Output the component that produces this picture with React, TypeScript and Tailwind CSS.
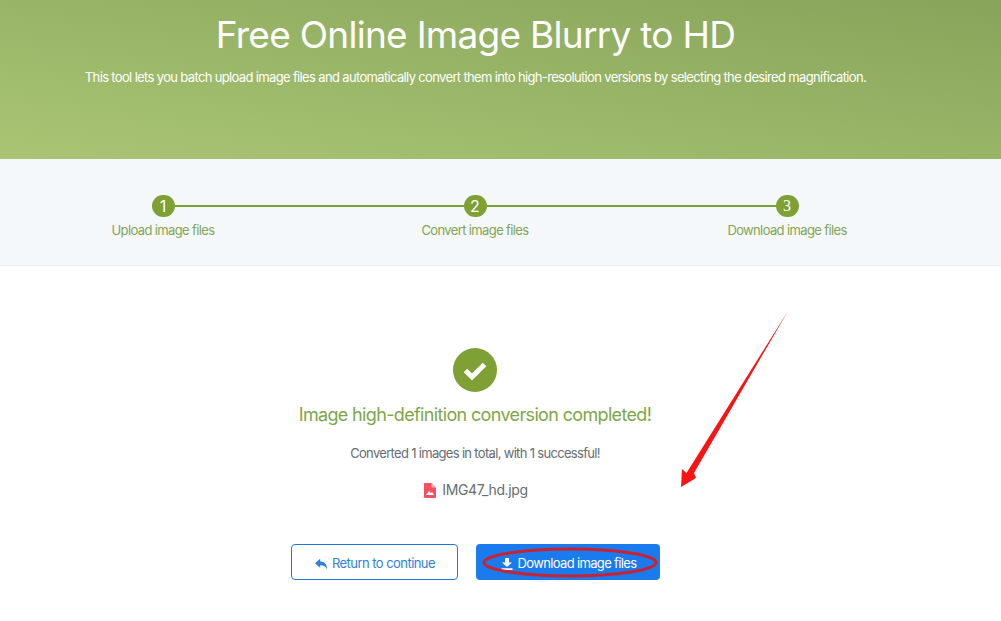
import React from "react";

function Step({ n, label, first, last }: { n: number; label: string; first?: boolean; last?: boolean }) {
  return (
    <div className="flex flex-col items-center relative">
      <div className="relative flex w-full justify-center items-center h-[22px]">
        {!first && <div className="absolute left-0 right-1/2 h-[2px] bg-[#7ea035]" />}
        {!last && <div className="absolute left-1/2 right-0 h-[2px] bg-[#7ea035]" />}
        <div className={"relative z-10 flex h-[22px] w-[23px] items-center justify-center rounded-full bg-[#7ea035] text-[16px] leading-none text-white " + (n === 3 ? "font-['Liberation_Serif',serif]" : "")}>
          {n}
        </div>
      </div>
      <div className="mt-[5px] text-[13px] leading-[16px] text-[#84a455] tracking-[-0.63px]">{label}</div>
    </div>
  );
}

export default function App() {
  return (
    <div className="relative h-[621px] w-[1001px] overflow-hidden bg-white font-['Inter','Liberation_Sans',sans-serif]">
      <header className="h-[159px] bg-gradient-to-tr from-[#a9c574] to-[#88a45a] pr-[50px] text-center text-white">
        <h1 className="pt-[12px] text-[37px] leading-[46px] font-normal tracking-[-0.72px]">Free Online Image Blurry to HD</h1>
        <p className="mt-[10px] text-[13px] leading-[18px] tracking-[-0.65px]">
          This tool lets you batch upload image files and automatically convert them into high-resolution versions by selecting the desired magnification.
        </p>
      </header>

      <section className="h-[107px] border-b border-[#e9edf0] bg-[#f4f8fb] pl-[7px] pr-[58px] pt-[36px]">
        <div className="grid grid-cols-3">
          <Step n={1} label="Upload image files" first />
          <Step n={2} label="Convert image files" />
          <Step n={3} label="Download image files" last />
        </div>
      </section>

      <main className="flex flex-col items-center pr-[51px] pt-[82px]">
        <svg viewBox="0 0 44 44" className="h-[44px] w-[44px]">
          <circle cx="22" cy="22" r="22" fill="#7ea035" />
          <path d="M12.5 22.5 L19 29 L31.5 16.5" fill="none" stroke="#fff" strokeWidth="5" />
        </svg>
        <h2 className="mt-[10px] text-[18px] leading-[26px] font-normal tracking-[-0.65px] text-[#7ea64a]">
          Image high-definition conversion completed!
        </h2>
        <p className="mt-[15px] text-[13px] leading-[20px] tracking-[-0.68px] text-[#666c72]">
          Converted 1 images in total, with 1 successful!
        </p>
        <div className="ml-[2px] mt-[17px] flex items-center gap-[6px] text-[14px] leading-[20px] tracking-[-0.37px] text-[#666c72]">
          <svg viewBox="0 0 12 15" className="h-[15px] w-[12px]">
            <path d="M0 1 Q0 0 1 0 H7.5 L12 4.5 V14 Q12 15 11 15 H1 Q0 15 0 14 Z" fill="#f4505f" />
            <path d="M7.5 0 L12 4.5 H8.5 Q7.5 4.5 7.5 3.5 Z" fill="#fbb4bb" />
            <path d="M2 12 L5 8 L6.8 10 L8 9 L10 12 Z" fill="#fff" />
          </svg>
          <span>IMG47_hd.jpg</span>
        </div>
        <div className="mt-[44px] flex gap-[18px]">
          <button className="flex h-[36px] w-[167px] items-center justify-center gap-[5px] rounded-[4px] border border-[#1d78d6] bg-white pl-[2px] pt-[3px] text-[13px] tracking-[-0.55px] text-[#2f7fdb]">
            <svg viewBox="0 0 14 12" className="h-[12px] w-[12px]">
              <path d="M0 5 L6 0 V3 C11 3 14 6 14 12 C12 8.5 10 7.5 6 7.5 V10.5 Z" fill="#2f7fdb" />
            </svg>
            Return to continue
          </button>
          <button className="relative flex h-[36px] w-[184px] items-center justify-center gap-[5px] rounded-[4px] bg-[#1a7bee] pl-[2px] pt-[3px] text-[13px] tracking-[-0.65px] text-white">
            <svg viewBox="0 0 12 12" className="h-[12px] w-[12px]">
              <path d="M4 0 H8 V4.5 H11 L6 9 L1 4.5 H4 Z M0.5 10.3 H11.5 V12 H0.5 Z" fill="#fff" />
            </svg>
            Download image files
            <svg viewBox="0 0 178 32" className="absolute left-[6px] top-[3px] h-[32px] w-[178px]">
              <ellipse cx="88" cy="15.5" rx="86" ry="13.5" fill="none" stroke="#c8232f" strokeWidth="3" />
            </svg>
          </button>
        </div>
      </main>

      <svg viewBox="0 0 1001 621" className="pointer-events-none absolute left-0 top-0 h-[621px] w-[1001px]">
        <path d="M788 311 L694 473 L696 478 L681 487 L682 469 L686.5 473 Z" fill="#f81414" />
      </svg>
    </div>
  );
}
